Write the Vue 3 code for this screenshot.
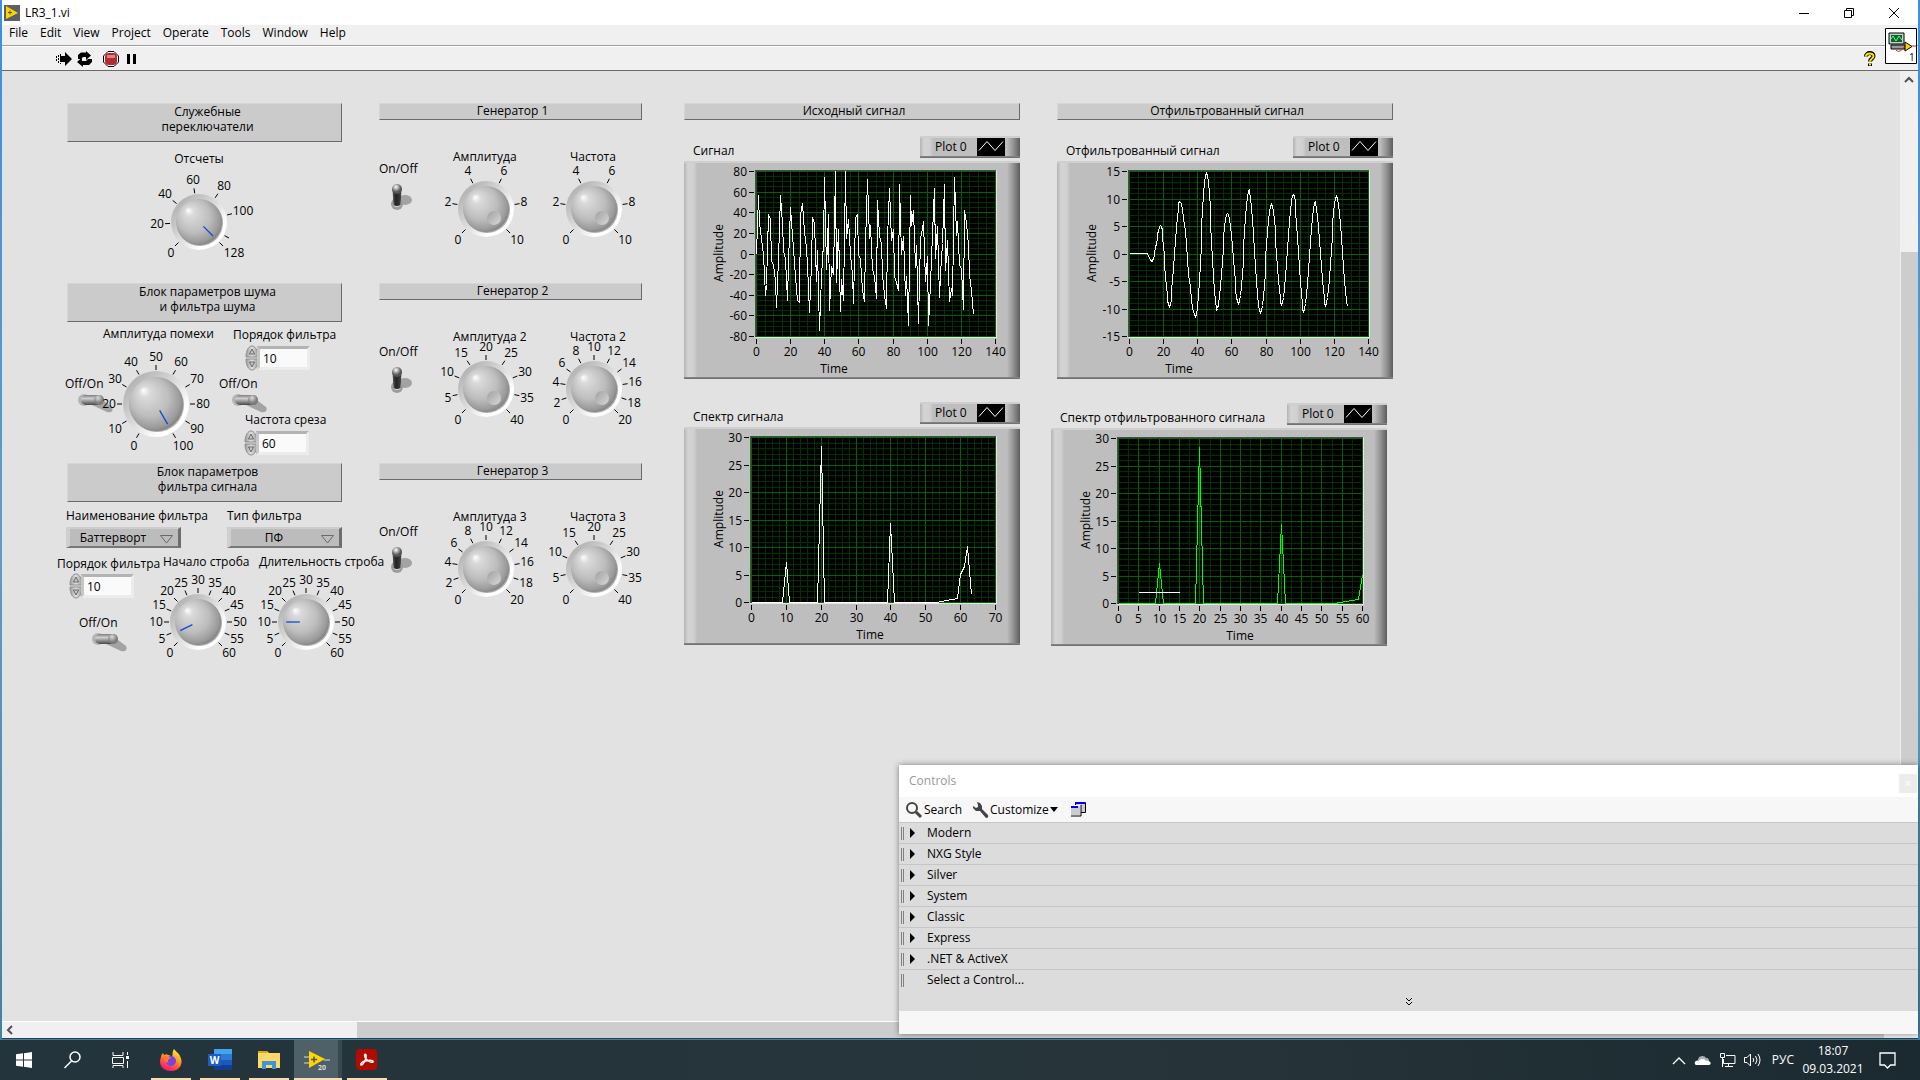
<script setup>
import { h } from 'vue'

const menus = ['File', 'Edit', 'View', 'Project', 'Operate', 'Tools', 'Window', 'Help']
const palette = ['Modern', 'NXG Style', 'Silver', 'System', 'Classic', 'Express', '.NET & ActiveX', 'Select a Control...']

const range = (from, to, step) => {
  const out = []
  for (let v = from; v <= to + 0.001; v += step) out.push(v)
  return out
}

/* Rotary knob with its scale; `sweep` is the angle between the first and the last mark */
const Knob = (p) => {
  const { r = 28, face = 23, max, step, marks, sweep = 270, value, name } = p
  const c = 43
  const list = marks || range(0, max, step).map((v) => [v, String(v)])
  const angle = (v) => ((90 + sweep / 2 - (v / max) * sweep) * Math.PI) / 180
  const at = (v, d) => [c + Math.cos(angle(v)) * d, c - Math.sin(angle(v)) * d]
  const kids = [
    h('circle', { cx: c, cy: c, r, fill: 'url(#ring)' }),
    h('circle', { cx: c + 1, cy: c + 1, r: face, fill: '#777', opacity: 0.6 }),
    h('circle', { cx: c, cy: c, r: face, fill: 'url(#face)' })
  ]
  for (const [v, text] of list) {
    const a = at(v, r + 1)
    const b = at(v, r + 6)
    kids.push(h('line', { x1: a[0], y1: a[1], x2: b[0], y2: b[1], stroke: '#000' }))
    if (!text) continue
    const co = Math.cos(angle(v))
    const si = Math.sin(angle(v))
    const half = text.length * 3.3
    const x = c + co * (r + 7) + Math.sign(co) * half * Math.min(1, Math.abs(co) * 1.4)
    const y = c - si * (r + 8) - Math.sign(si) * 6 * Math.min(1, Math.abs(si) * 1.4)
    kids.push(h('text', { x: Math.round(x), y: Math.round(y) + 4, 'text-anchor': 'middle' }, text))
  }
  if (value === undefined) {
    kids.push(h('circle', { cx: c + 8, cy: c + 9, r: 7, fill: 'url(#dimple)' }))
  } else {
    const a = at(value, face * 0.27)
    const b = at(value, face * 0.86)
    kids.push(h('line', { x1: a[0], y1: a[1], x2: b[0], y2: b[1], stroke: '#1048d8', 'stroke-width': 1.3 }))
  }
  return h('span', { class: 'knob' }, [
    h('svg', { width: 86, height: 86, viewBox: '0 0 86 86' }, kids),
    h('input', { type: 'range', min: 0, max, value: value ?? max, 'aria-label': name })
  ])
}
Knob.props = ['r', 'face', 'max', 'step', 'marks', 'sweep', 'value', 'name']

const countMarks = [[0, '0'], [20, '20'], [40, '40'], [60, '60'], [80, '80'], [100, '100'], [120, ''], [128, '128']]

const generators = [
  { n: 1, title: 'Генератор 1', amp: 'Амплитуда', freq: 'Частота', am: 10, as: 2, fm: 10, fs: 2 },
  { n: 2, title: 'Генератор 2', amp: 'Амплитуда 2', freq: 'Частота 2', am: 40, as: 5, fm: 20, fs: 2 },
  { n: 3, title: 'Генератор 3', amp: 'Амплитуда 3', freq: 'Частота 3', am: 20, as: 2, fm: 40, fs: 5 }
]

const noisy = [
  0, 57, 30, 15, 0, -40, -30, 38, 33, -7, -10, -27, -52, -5, 57, 30, 3, -5, -45, -8, 45, 18, -8, -22, -45, -47, 38, 49, 22, 5,
  -10, -57, -10, 35, 30, -27, 3, -74, -22, 10, 74, -15, 38, -55, -12, -20, 80, -28, 24, -56, -25, -45, 80, 15, 33, 0, -20, -48,
  35, 38, 0, -5, -35, -46, 10, 72, 15, 28, -15, -22, -43, 52, 18, 10, -20, -40, -53, 15, 64, 13, 24, -22, -28, -35, 67, 0, 17,
  -40, -22, -69, 57, 28, 42, -13, 8, -67, 15, 25, 32, -27, -2, -69, -30, 20, 64, -4, 27, -42, -20, 10, 67, -16, 13, -46, -33,
  -40, 74, 18, 32, -10, -15, -54, 42, 30, 8, -20, -35, -59
].map((v, t) => [t, v])

const turns = [
  [10, 0.1], [13.3, -1.3], [18.2, 5.2], [23.3, -9.5], [29.5, 9.5], [38.6, -11.4], [45.2, 14.7], [51.2, -10.3], [57.4, 7.4],
  [64, -9], [70, 11.8], [76.6, -10.6], [83.3, 9], [89.2, -9.2], [96, 10.9], [102.1, -10.4], [108.7, 9.6], [115, -9.3],
  [121.3, 10.4], [128, -9.8]
]
const filtered = [[0, 0.1]]
turns.slice(1).forEach(([t1, v1], i) => {
  const [t0, v0] = turns[i]
  for (let k = 0; k < 12; k++) {
    const t = t0 + ((t1 - t0) * k) / 12
    filtered.push([t, (v0 + v1) / 2 + ((v0 - v1) / 2) * Math.cos((Math.PI * k) / 12)])
  }
})

const spectrum = [
  [0, 0.05], [9, 0.05], [10, 7.2], [11, 0.05], [19, 0.05], [20, 28.4], [21, 0.05], [39, 0.05], [40, 14.3], [41, 0.05],
  [53, 0.05], [56, 0.3], [59, 0.8], [60, 5.1], [61, 6.5], [62, 10.2], [63, 1.5]
]

const wave = { left: 72, yMin: -80, yMax: 80, yStep: 20, yMinor: 5, xMax: 140, xStep: 20, xMinor: 5, time: 150 }
const spec = { left: 67, yMin: 0, yMax: 30, yStep: 5, yMinor: 1, xMax: 70, xStep: 10, xMinor: 2, time: 186 }
const columns = [
  {
    title: 'Исходный сигнал',
    graphs: [
      { ...wave, id: 'signal', title: 'Сигнал', lines: [{ c: '#fff', p: noisy }] },
      { ...spec, id: 'spectrum', title: 'Спектр сигнала', lines: [{ c: '#fff', p: spectrum }] }
    ]
  },
  {
    title: 'Отфильтрованный сигнал',
    graphs: [
      { ...wave, id: 'filtered', title: 'Отфильтрованный сигнал', yMin: -15, yMax: 15, yStep: 5, yMinor: 1, time: 122, lines: [{ c: '#fff', p: filtered }] },
      {
        ...spec, id: 'filtered-spectrum', title: 'Спектр отфильтрованного сигнала', xMax: 60, xStep: 5, xMinor: 2.5, time: 189,
        lines: [{ c: '#0f0', p: spectrum.slice(0, 14) }, { c: '#fff', p: [[5, 2], [15, 2]] }]
      }
    ]
  }
]

const RIGHT = 312
const TOP = 10
const BOTTOM = 175
const px = (g, x) => Math.round(g.left + (x / g.xMax) * (RIGHT - 1 - g.left)) + 0.5
const py = (g, y) => Math.round(BOTTOM - ((y - g.yMin) / (g.yMax - g.yMin)) * (BOTTOM - TOP)) + 0.5
const pts = (g, line) => line.p.map(([x, y]) => `${px(g, x)},${py(g, y)}`).join(' ')
const gridPath = (g, xs, ys) =>
  range(0, g.xMax, xs).map((v) => `M${px(g, v)} ${TOP}V${BOTTOM}`).join('') +
  range(g.yMin, g.yMax, ys).map((v) => `M${g.left} ${py(g, v)}H${RIGHT}`).join('')

const place = (x, y) => ({ left: x + 'px', top: y + 'px' })
const noiseText = [
  { t: 'Амплитуда помехи', x: 36, y: 43 },
  { t: 'Порядок фильтра', x: 166, y: 44, f: 'noise-order' },
  { t: 'Частота среза', x: 178, y: 129, f: 'cutoff' }
]
const filterText = [
  { t: 'Наименование фильтра', x: -1, y: 45, f: 'filter-name' },
  { t: 'Тип фильтра', x: 160, y: 45, f: 'filter-type' },
  { t: 'Порядок фильтра', x: -10, y: 93, f: 'signal-order' },
  { t: 'Начало строба', x: 96, y: 91 },
  { t: 'Длительность строба', x: 192, y: 91 }
]
const numerics = {
  noise: [{ id: 'noise-order', v: '10', x: 178, y: 62 }, { id: 'cutoff', v: '60', x: 177, y: 147 }],
  filter: [{ id: 'signal-order', v: '10', x: 2, y: 110 }]
}
const NumberBox = (p) =>
  h('span', { class: 'number' }, [
    h('svg', { width: 14, height: 26, viewBox: '0 0 14 26' }, [
      h('path', { d: 'M1 12C1 5 4 1 7 1s6 4 6 11z', fill: 'url(#spin)', stroke: '#8f8f8f' }),
      h('path', { d: 'M1 14c0 7 3 11 6 11s6-4 6-11z', fill: 'url(#spin)', stroke: '#8f8f8f' }),
      h('path', { d: 'M4.500 9 7 4l2.500 5z', fill: '#ccc', stroke: '#666' }),
      h('path', { d: 'M4.500 17h5L7 22z', fill: '#ccc', stroke: '#666' })
    ]),
    h('input', { type: 'text', id: p.id, value: p.value })
  ])
NumberBox.props = ['id', 'value']

const LeverH = () =>
  h('svg', { width: 36, height: 22, viewBox: '0 0 36 22' }, [
    h('path', { d: 'M12 8h14l8 6c2 4-1 6-5 5L14 12z', fill: '#a3a3a3' }),
    h('circle', { cx: 6, cy: 7, r: 6, fill: '#b4b4b4' }),
    h('rect', { x: 3, y: 2, width: 23, height: 10, rx: 5, fill: 'url(#lever)' }),
    h('circle', { cx: 21, cy: 7, r: 5, fill: 'url(#knobend)' })
  ])
const LeverV = () =>
  h('svg', { width: 22, height: 28, viewBox: '0 0 22 28' }, [
    h('ellipse', { cx: 14, cy: 16, rx: 7, ry: 5, fill: '#a3a3a3' }),
    h('circle', { cx: 6, cy: 20, r: 6, fill: '#9c9c9c' }),
    h('circle', { cx: 6, cy: 19, r: 4, fill: '#d5d5d5' }),
    h('path', { d: 'M1.500 5h9l-1 16q-3.500 2-7 0z', fill: 'url(#stick)' }),
    h('circle', { cx: 6, cy: 5, r: 5, fill: 'url(#ball)' })
  ])
</script>

<template>
  <div class="desktop">
    <svg class="defs" width="0" height="0" aria-hidden="true">
      <defs>
        <linearGradient id="ring" x1=".15" y1=".15" x2=".85" y2=".85">
          <stop offset="0" stop-color="#b4b4b4" /><stop offset=".5" stop-color="#dedede" /><stop offset=".85" stop-color="#fff" />
        </linearGradient>
        <radialGradient id="face" cx=".5" cy=".5" r=".72" fx=".26" fy=".24">
          <stop offset="0" stop-color="#fff" /><stop offset=".14" stop-color="#dadada" /><stop offset=".5" stop-color="#bdbdbd" />
          <stop offset=".72" stop-color="#9a9a9a" /><stop offset="1" stop-color="#3c3c3c" />
        </radialGradient>
        <linearGradient id="dimple" x1="0" y1="0" x2="1" y2="1">
          <stop offset="0" stop-color="#a0a0a0" /><stop offset="1" stop-color="#d8d8d8" />
        </linearGradient>
        <linearGradient id="spin"><stop offset="0" stop-color="#999" /><stop offset=".5" stop-color="#e2e2e2" /><stop offset="1" stop-color="#999" /></linearGradient>
        <linearGradient id="lever" x2="0" y2="1"><stop offset="0" stop-color="#7d7d7d" /><stop offset=".35" stop-color="#cfcfcf" /><stop offset="1" stop-color="#484848" /></linearGradient>
        <radialGradient id="knobend" cx=".4" cy=".3"><stop offset="0" stop-color="#dcdcdc" /><stop offset="1" stop-color="#7c7c7c" /></radialGradient>
        <linearGradient id="stick"><stop offset="0" stop-color="#555" /><stop offset=".4" stop-color="#222" /><stop offset="1" stop-color="#444" /></linearGradient>
        <radialGradient id="ball" cx=".4" cy=".3"><stop offset="0" stop-color="#fff" /><stop offset=".5" stop-color="#a8a8a8" /><stop offset="1" stop-color="#555" /></radialGradient>
      </defs>
    </svg>

    <main class="window">
      <header class="titlebar">
        <svg width="16" height="16" viewBox="0 0 16 16"><path fill="#5d5f66" d="M0 0h16v16H0z" /><path fill="#ffd500" d="M2 1l12 7-12 6z" /><path stroke="#555" d="M4 7.500h4M6 5.500v4" /></svg>
        <span>LR3_1.vi</span>
        <div class="wbtns">
          <button aria-label="Minimize"><svg width="12" height="12"><path d="M1 6.500h10" /></svg></button>
          <button aria-label="Restore"><svg width="12" height="12"><path d="M1.500 3.500h7v7h-7zM3.500 3V1.500h7v7H9" /></svg></button>
          <button aria-label="Close"><svg width="12" height="12"><path d="M1 1l10 10M11 1L1 11" /></svg></button>
        </div>
      </header>
      <nav class="menubar"><button v-for="m in menus" :key="m">{{ m }}</button></nav>
      <div class="toolbar">
        <button aria-label="Run"><svg width="16" height="16"><path d="M.5 5v6M2.500 4v8M4.500 3v10" stroke="#000" stroke-dasharray="2 1" /><path d="M4 5h5V1l7 7-7 7v-4H4z" /></svg></button>
        <button aria-label="Run Continuously"><svg width="16" height="16"><path d="M1 7V4l3-2.500h5V0l5 4.500L9 9V6H6L4 8H1zM0 11l5-4.500V10h4l2-2h4v3l-3 3H6v2z" /></svg></button>
        <button class="stop" aria-label="Abort Execution"><svg width="16" height="16"><path d="M5 .5h6L15.500 5v6L11 15.500H5L.5 11V5z" fill="#fff" stroke="#000" /><rect x="2" y="2" width="12" height="12" rx="4" fill="#b52b30" /><path d="M4 4h8v3H4z" fill="#d98486" /></svg></button>
        <button class="pause" aria-label="Pause"><svg width="10" height="16"><path d="M0 3h3v10H0zM6 3h3v10H6z" /></svg></button>
        <button class="help" aria-label="Context Help"><svg width="12" height="16"><path d="M2 5.500C2 1 9.500 1 9.500 5c0 3-3.500 2.500-3.500 5.500M6 12.500v2.500" fill="none" stroke="#000" stroke-width="4" /><path d="M2 5.500C2 1.500 9.500 1.500 9.500 5c0 3-3.500 2.500-3.500 5.500M6 12.500v2" fill="none" stroke="#ffe600" stroke-width="2" /></svg></button>
      </div>
      <button class="vi-icon" aria-label="VI icon">
        <svg width="32" height="36" viewBox="0 0 32 36">
          <path d="M.5.5h31v35H.5z" fill="#fff" stroke="#000" />
          <path d="M4 5h15v11H4z" fill="#ccc" stroke="#000" /><path d="M6 7h11v7H6z" fill="#063" /><path d="M6 11l2-3 3 5 3-5 3 4" fill="none" stroke="#6f6" />
          <path d="M6 17h14v4H6z" fill="#999" stroke="#000" /><path d="M20 14l7 4.500-7 4.500z" fill="#ffd500" stroke="#000" /><path d="M11 22c4 4 6-2 9-3M27 18h4" fill="none" stroke="#d02020" />
          <text class="mini" x="24" y="33">1</text>
        </svg>
      </button>

      <section class="workspace">
        <div class="panel">
          <div class="left-col">
            <section class="block">
              <h2>Служебные<br>переключатели</h2>
              <div class="counts"><span>Отсчеты</span><Knob name="Отсчеты" :max="128" :marks="countMarks" :value="128" /></div>
            </section>
            <section class="block">
              <h2>Блок параметров шума<br>и фильтра шума</h2>
              <label v-for="l in noiseText" :key="l.t" class="put" :for="l.f" :style="place(l.x, l.y)">{{ l.t }}</label>
              <label class="put lever" :style="place(-2, 93)"><span>Off/On</span><input type="checkbox"><LeverH /></label>
              <label class="put lever" :style="place(152, 93)"><span>Off/On</span><input type="checkbox"><LeverH /></label>
              <Knob class="put" :style="place(46, 78)" name="Амплитуда помехи" :r="33" :face="27" :max="100" :step="10" :sweep="300" :value="100" />
              <NumberBox v-for="n in numerics.noise" :key="n.id" :id="n.id" class="put" :value="n.v" :style="place(n.x, n.y)" />
            </section>
            <section class="block">
              <h2>Блок параметров<br>фильтра сигнала</h2>
              <label v-for="l in filterText" :key="l.t" class="put" :for="l.f" :style="place(l.x, l.y)">{{ l.t }}</label>
              <span class="put ring" :style="place(-1, 64)"><select id="filter-name"><option>Баттерворт</option></select><svg width="13" height="9"><path d="M.5.5h12L6.500 8z" /></svg></span>
              <span class="put ring" :style="place(160, 64)"><select id="filter-type"><option>ПФ</option></select><svg width="13" height="9"><path d="M.5.5h12L6.500 8z" /></svg></span>
              <NumberBox v-for="n in numerics.filter" :key="n.id" :id="n.id" class="put" :value="n.v" :style="place(n.x, n.y)" />
              <label class="put lever" :style="place(12, 152)"><span>Off/On</span><input type="checkbox"><LeverH /></label>
              <Knob class="put" :style="place(88, 116)" name="Начало строба" :max="60" :step="5" :value="4.3" />
              <Knob class="put" :style="place(196, 116)" name="Длительность строба" :max="60" :step="5" :value="10" />
            </section>
          </div>

          <div class="gen-col">
            <section v-for="g in generators" :key="g.n" class="block">
              <h2>{{ g.title }}</h2>
              <div class="gen">
                <label class="onoff"><span>On/Off</span><input type="checkbox" checked><LeverV /></label>
                <div class="dial amp"><span>{{ g.amp }}</span><Knob :name="g.amp" :max="g.am" :step="g.as" /></div>
                <div class="dial freq"><span>{{ g.freq }}</span><Knob :name="g.freq" :max="g.fm" :step="g.fs" /></div>
              </div>
            </section>
          </div>

          <div v-for="c in columns" :key="c.title" class="graph-col">
            <h2>{{ c.title }}</h2>
            <figure v-for="g in c.graphs" :key="g.id" :class="g.id">
              <figcaption>
                <span>{{ g.title }}</span>
                <button class="legend bevel">Plot 0<svg width="28" height="18"><path d="M0 0h28v18H0z" /><path d="M2 12.500L10 3.500l8 9 8-9" fill="none" stroke="#fff" /></svg></button>
              </figcaption>
              <svg class="graph bevel" width="336" height="218" viewBox="0 0 336 218">
                <path :d="`M${g.left - 1} 9H${RIGHT}V176H${g.left - 1}z`" fill="#000" />
                <path :d="gridPath(g, g.xMinor, g.yMinor)" class="minor" />
                <path :d="gridPath(g, g.xStep, g.yStep)" class="major" />
                <polyline v-for="(l, i) in g.lines" :key="i" :points="pts(g, l)" :stroke="l.c" class="trace" />
                <path :d="`M${g.left - 1} 9.500H${RIGHT}M${g.left - 0.5} 9V176`" stroke="#4c4c4c" />
                <path :d="`M${g.left - 1} 176.500H${RIGHT + 0.5}V9`" fill="none" stroke="#e6e6e6" />
                <g v-for="v in range(g.yMin, g.yMax, g.yStep)" :key="'y' + v">
                  <path :d="`M${g.left - 7} ${py(g, v)}h5`" stroke="#000" />
                  <text :x="g.left - 9" :y="py(g, v) + 4" text-anchor="end">{{ v }}</text>
                </g>
                <g v-for="v in range(0, g.xMax, g.xStep)" :key="'x' + v">
                  <path :d="`M${px(g, v)} 178v5`" stroke="#000" />
                  <text :x="px(g, v)" y="195" text-anchor="middle">{{ v }}</text>
                </g>
                <text :x="g.time" y="212" text-anchor="middle">Time</text>
                <text transform="translate(39 92) rotate(-90)" text-anchor="middle">Amplitude</text>
              </svg>
            </figure>
          </div>
        </div>
        <div class="vscroll"><svg width="10" height="6"><path d="M1 5l4-4 4 4" /></svg><i></i></div>
      </section>
      <div class="hscroll"><svg width="6" height="10"><path d="M5 1L1 5l4 4" /></svg><i></i></div>
    </main>

    <aside class="palette">
      <header>Controls<button aria-label="Close palette">×</button></header>
      <div class="ptools">
        <button><svg width="16" height="16"><circle cx="6" cy="6" r="5" fill="none" stroke="#444" stroke-width="2" /><path d="M10 10l5 5" stroke="#444" stroke-width="3" /></svg>Search</button>
        <button class="custom"><svg width="16" height="16"><path d="M4 0l3 1 2 3v3l6 6q1 3-2 3L7 9H3L0 6V4l3 2 2-1V3z" fill="#444" /></svg>Customize<svg width="8" height="6"><path d="M0 0h8L4 5z" /></svg></button>
        <button class="views" aria-label="Views"><svg width="16" height="15"><path d="M5.500.5h10v10h-10z" fill="#ccc" stroke="#000" /><path d="M5 0h10v2H5z" fill="#00f" /><path d="M.5 3.500h10v10H.5z" fill="#ccc" stroke="#fff" /><path d="M11 3v11H1" fill="none" stroke="#000" /><path d="M1 4h7v2H1z" fill="#00f" /></svg></button>
      </div>
      <ul>
        <li v-for="(p, i) in palette" :key="p"><i></i><svg width="6" height="10"><path v-if="i < 7" d="M0 0l5 5-5 5z" /></svg><a href="#">{{ p }}</a></li>
      </ul>
      <div class="more"><svg width="8" height="9"><path d="M1 1l3 3 3-3M1 5l3 3 3-3" fill="none" stroke="#000" /></svg></div>
      <footer></footer>
    </aside>

    <footer class="taskbar">
      <button aria-label="Start" class="start"><svg width="16" height="16" fill="#fff"><path d="M0 2.300l7-1v6.200H0zM8 1.200L16 0v7.500H8zM0 8.500h7v6.200l-7-1zM8 8.500h8V16l-8-1.200z" /></svg></button>
      <button aria-label="Search" class="find"><svg width="18" height="18" fill="none" stroke="#fff" stroke-width="1.500"><circle cx="11" cy="6" r="5" /><path d="M7.500 10l-7 7" /></svg></button>
      <button aria-label="Task View" class="view"><svg width="17" height="16" fill="none" stroke="#fff"><path d="M1 0v3.500h10V0M.5 5.500h11v6H.5zM1 16v-2.500h10V16M15.500 0v3M15.500 9v7" /><path d="M14 4h3v3h-3z" fill="#fff" stroke="none" /></svg></button>
      <button aria-label="Firefox" class="app"><svg width="24" height="24" viewBox="0 0 24 24"><defs><linearGradient id="fx" x1=".8" y1="0" x2=".3" y2="1"><stop offset="0" stop-color="#fff04a" /><stop offset=".45" stop-color="#ff9420" /><stop offset=".8" stop-color="#ff3a52" /><stop offset="1" stop-color="#e01a8c" /></linearGradient></defs><path d="M15 1c1 2 5 4 6 7 4 7 0 15-9 15S-1 16 2 9c0-2 1-3 2-4l1 2c2-1 3-1 4 0 2 0 3 1 4 2 1-3 0-5 2-8z" fill="url(#fx)" /><circle cx="12" cy="13" r="5" fill="#7542e5" /><path d="M5 8c4-1 5 1 7 2-3 1-4 3-2 5-4-1-5-4-5-7z" fill="#ff7a2a" /></svg></button>
      <button aria-label="Word" class="app"><svg width="24" height="22" viewBox="0 0 24 22"><path d="M6 0h18v6H6z" fill="#41a5ee" /><path d="M6 5h18v6H6z" fill="#2b7cd3" /><path d="M6 11h18v5H6z" fill="#185abd" /><path d="M6 16h18v5H6z" fill="#103f91" /><path d="M0 5h13v12H0z" fill="#1e5dc0" /><text class="mini bold" x="6.500" y="15" text-anchor="middle" fill="#fff">W</text></svg></button>
      <button aria-label="Explorer" class="app"><svg width="22" height="20" viewBox="0 0 22 20"><path d="M0 1h9l2 2h11v15H0z" fill="#ffd868" /><path d="M0 1h9l1 2H0z" fill="#e8a317" /><path d="M4 19v-8h14v8h-4v-4H8v4z" fill="#3a96dd" /></svg></button>
      <button aria-label="LabVIEW" class="app active"><svg width="26" height="24" viewBox="0 0 26 24"><path d="M0 9h6M0 15h6M20 12h6" stroke="#a9b2b7" stroke-width="1.500" /><path d="M5 3l16 8L5 20z" fill="#ffd500" /><path d="M7 11.500h6M10 8.500v6" stroke="#555" stroke-width="1.500" /><text class="tiny bold" x="14" y="22" fill="#ddd">20</text></svg></button>
      <button aria-label="Acrobat" class="app last"><svg width="22" height="22" viewBox="0 0 22 22"><rect width="21" height="21" rx="4" fill="#b30b00" /><path d="M5 16c2 0 6-6 5-10-1-2-2 0-1 2 1 3 5 6 8 5 1-2-4-2-7-1-3 0-6 2-5 4z" fill="none" stroke="#fff" stroke-width="1.500" /></svg></button>
      <div class="tray">
        <svg width="14" height="9" fill="none" stroke="#fff" stroke-width="1.400"><path d="M1 8l6-6 6 6" /></svg>
        <svg width="17" height="12"><path d="M4 6c0-5 7-5 8-2 3 0 3 2 3 4H3z" fill="#a8b0b4" /><path d="M2 11c-3-2 0-6 3-4 2-3 6-2 7 0 5-1 6 4 3 4z" fill="#fff" /></svg>
        <svg width="17" height="14" fill="none" stroke="#fff"><path d="M7 2.500h9v8H4.500V6M9.500 11v2.500M6 13.500h8M1.500.5h4v4h-4zM3.500 5v9" /></svg>
        <svg width="17" height="14" fill="none" stroke="#fff"><path d="M.5 4.500H3L6.500 1v12L3 9.500H.5zM9 5q1.500 2 0 4M11.500 3q3 4 0 8M14 1q4 6 0 12" /></svg>
        <span class="lang">РУС</span>
        <time>18:07<br>09.03.2021</time>
        <svg class="note" width="17" height="18" fill="none" stroke="#fff" stroke-width="1.300"><path d="M1 2h15v12h-4.500l-3 3-3-3H1z" /></svg>
      </div>
    </footer>
  </div>
</template>

<style>
body { margin: 0; overflow: hidden; }
</style>

<style scoped>
.desktop { position: relative; display: flex; flex-direction: column; height: 100vh; font: 12px/16px "Open Sans", "Noto Sans", sans-serif; color: #000; background: linear-gradient(#3c8ee0, #5d9ec8 50%, #3f7f9f); overflow: hidden; }
.defs { position: absolute; }
button { font: inherit; color: inherit; border: 0; padding: 0; background: none; display: flex; align-items: center; }
h2 { margin: 0; font: inherit; text-align: center; box-sizing: border-box; background: #cbcbcb; border: 1px solid #6a6a6a; border-top-color: #d6d6d6; border-left-color: #d6d6d6; }
svg { flex: none; }

.window { position: relative; flex: 1; display: flex; flex-direction: column; margin: 0 2px 2px; min-height: 0; background: #f0f0f0; box-shadow: 0 1px #2d3f48; }
.titlebar { display: flex; align-items: center; gap: 5px; height: 25px; padding-left: 2px; background: #fff; }
.wbtns { display: flex; margin-left: auto; margin-right: 2px; }
.wbtns button { width: 45px; height: 22px; justify-content: center; }
.wbtns path { fill: none; stroke: #000; }
.menubar { display: flex; align-items: flex-start; gap: 12px; height: 20px; padding-left: 7px; border-bottom: 1px solid #a0a0a0; }
.toolbar { display: flex; align-items: center; gap: 5px; height: 23px; padding: 0 42px 0 54px; border-top: 1px solid #fff; border-bottom: 1px solid #696969; }
.stop { margin-left: 5px; }
.pause { margin-left: 3px; }
.help { margin-left: auto; }
.vi-icon { position: absolute; top: 28px; right: 1px; }

.workspace { flex: 1; display: flex; min-height: 0; background: #e2e2e2; border-bottom: 1px solid #fff; }
.panel { flex: 1; display: flex; align-items: flex-start; padding: 32px 0 0 65px; }
.left-col { width: 275px; margin-right: 37px; }
.gen-col { width: 263px; margin-right: 42px; }
.graph-col { width: 336px; margin-right: 37px; }
.block { position: relative; min-height: 180px; }
.left-col h2 { height: 39px; line-height: 15px; padding-left: 6px; }
.gen-col h2, .graph-col h2 { height: 17px; line-height: 14px; padding-left: 4px; }
.put { position: absolute; white-space: nowrap; }
:deep(text) { font-size: 12px; }
.mini { font-size: 10px; }
.tiny { font-size: 7px; }
.bold { font-weight: 700; }
:deep(svg) { display: block; overflow: visible; }

.counts { display: flex; flex-direction: column; align-items: center; gap: 12px; padding: 9px 11px 0 0; }
.gen { display: flex; padding-top: 29px; }
.onoff { flex: none; display: flex; flex-direction: column; gap: 7px; width: 64px; padding-top: 12px; }
.block + .block .onoff { padding-top: 15px; }
.onoff :deep(svg) { margin-left: 12px; }
.dial { flex: none; display: flex; flex-direction: column; gap: 1px; width: 86px; margin-right: 22px; white-space: nowrap; }
.dial:last-child { margin-right: 0; }
.amp > span:first-child { padding-left: 10px; }
.freq > span:first-child { padding-left: 19px; }
:deep(.knob), .knob { width: 86px; height: 86px; }
:deep(.knob input), .knob input { position: absolute; width: 60px; margin: -60px 0 0 13px; opacity: 0; }
.lever { display: flex; flex-direction: column; }
.lever :deep(svg) { margin: 1px 0 0 13px; }
.lever input, .onoff input { position: absolute; opacity: 0; margin: 20px 12px; }
.number { display: flex; align-items: center; }
.number :deep(input), .number input { box-sizing: border-box; width: 53px; height: 24px; margin-left: -2px; padding: 0 0 0 3px; font: inherit; background: #fafafa; border: 3px solid #ececec; border-top-color: #b3b3b3; border-left-color: #c6c6c6; outline: 0; }
.ring svg { position: absolute; right: 8px; top: 8px; fill: #bcbcbc; stroke: #6a6a6a; }
.ring select { appearance: none; display: block; width: 115px; height: 21px; padding: 0 22px 0 0; font: inherit; color: #000; text-align-last: center; border: 0; border-radius: 0; border-right: 3px solid #6d6d6d; border-bottom: 2px solid #777; border-left: 4px solid #cfcfcf; border-top: 2px solid #cdcdcd; background: #bcbcbc; }

figure { margin: 16px 0 0; }
figure + figure { margin-top: 23px; }
figure.filtered-spectrum { margin: 24px 6px 0 -6px; }
figcaption { display: flex; justify-content: space-between; align-items: center; height: 22px; margin-bottom: 3px; padding-left: 9px; }
figcaption span { margin-top: 8px; }
.legend { box-sizing: border-box; width: 100px; height: 22px; padding-left: 15px; gap: 10px; }
.bevel { background: linear-gradient(#cfcfcf, #cfcfcf) 0 0 / 100% 2px no-repeat, linear-gradient(#8a8a8a, #6a6a6a) 0 100% / 100% 2px no-repeat, linear-gradient(90deg, #b4b4b4, #d4d4d4 4px, #d0d0d0 10px, #bebebe 13px, #bebebe calc(100% - 13px), #8e8e8e calc(100% - 6px), #5c5c5c) #bebebe; }
.minor, .major, .trace, .graph path { shape-rendering: crispEdges; }
.minor { stroke: #003200; }
.major { stroke: #006400; }
.trace { fill: none; }

.vscroll { width: 18px; background: #f0f0f0; display: flex; flex-direction: column; align-items: center; padding-top: 6px; }
.vscroll i { flex: 1; width: 17px; margin-top: 169px; background: #cdcdcd; }
.vscroll path, .hscroll path { fill: none; stroke: #505050; stroke-width: 2; }
.hscroll { display: flex; align-items: center; height: 16px; padding-left: 5px; }
.hscroll i { width: 1527px; max-width: 80%; height: 16px; margin-left: 344px; background: #cdcdcd; }

.palette { position: absolute; right: 2px; bottom: 46px; width: 1019px; background: #f7f7f7; box-shadow: 0 0 6px rgb(0 0 0 / 45%); }
.palette header { display: flex; justify-content: space-between; align-items: center; height: 32px; padding: 0 1px 0 10px; background: #fff; color: #999; }
.palette header button { width: 18px; height: 19px; margin-top: 5px; justify-content: center; background: #ececec; color: #fff; }
.ptools { display: flex; align-items: center; height: 25px; padding-left: 7px; }
.ptools button { gap: 2px; }
.ptools .custom { margin-left: 11px; gap: 1px; }
.ptools .views { margin-left: 12px; }
ul { margin: 0; padding: 0; list-style: none; background: #dcdcdc; border-top: 1px solid #c8c8c8; }
li { box-sizing: border-box; display: flex; align-items: center; height: 21px; border-bottom: 1px solid #c6c6c6; }
li:last-child { border-color: #dcdcdc; }
li i { width: 1px; height: 13px; margin: 0 6px 0 2px; border: solid #808080; border-width: 0 1px; }
li a { margin-left: 11px; color: #000; text-decoration: none; }
.more { display: flex; justify-content: center; align-items: center; height: 20px; background: #dcdcdc; }
.palette footer { height: 23px; }

.taskbar { display: flex; align-items: center; height: 40px; padding-left: 16px; color: #fff; background: linear-gradient(90deg, #24343c, #27353b 60%, #1b2a30); }
.find { margin-left: 32px; }
.view { margin-left: 30px; margin-right: 22px; }
.app { box-sizing: border-box; width: 40px; height: 40px; margin-right: 9px; padding-top: 2px; justify-content: center; border-bottom: 2px solid #fcdcae; }
.active { width: 48px; margin: 0 5px 0 -4px; padding-right: 2px; background: linear-gradient(90deg, #506068 44px, #39484f 44px); }
.tray { display: flex; align-items: center; height: 40px; margin-left: auto; padding-right: 24px; gap: 8px; }
.lang { margin-left: 3px; }
time { width: 62px; margin: 0 7px 0 0; text-align: center; line-height: 18px; }
</style>
